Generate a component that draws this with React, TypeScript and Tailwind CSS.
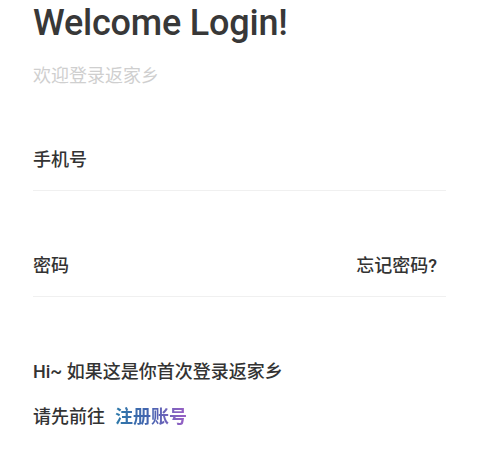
import React from 'react';

const cjk = "font-['Roboto','Noto_Sans_CJK_SC',sans-serif]";

const Field: React.FC<{ label: string; extra?: string }> = ({ label, extra }) => (
  <div className="flex items-center justify-between border-b border-[#f0f0f0] pt-[66px] pb-[21px]">
    <span className="text-[18px] leading-[18px] font-medium text-[#333]">{label}</span>
    {extra && (
      <span className="mr-[9px] text-[18px] leading-[18px] font-medium text-[#333]">{extra}</span>
    )}
  </div>
);

const App: React.FC = () => {
  return (
    <div className={`w-[478px] h-[451px] overflow-hidden bg-white pl-[33px] pr-[32px] ${cjk}`}>
      <h1 className="pt-[5px] text-[36px] leading-[36px] font-medium text-[#383838] tracking-[-0.2px]">
        Welcome Login!
      </h1>
      <p className="mt-[26px] text-[18px] leading-[18px] text-[#cfcfcf]">欢迎登录返家乡</p>

      <Field label="手机号" />
      <Field label="密码" extra="忘记密码?" />

      <p className="mt-[66px] text-[18px] leading-[18px] font-medium text-[#333]">
        Hi~ 如果这是你首次登录返家乡
      </p>
      <p className="mt-[27px] text-[18px] leading-[18px] font-medium text-[#333]">
        请先前往
        <span className="ml-[10px] font-bold bg-gradient-to-r from-[#2a78a8] via-[#4563b0] to-[#9b5fc6] bg-clip-text text-transparent">
          注册账号
        </span>
      </p>
    </div>
  );
};

export default App;
